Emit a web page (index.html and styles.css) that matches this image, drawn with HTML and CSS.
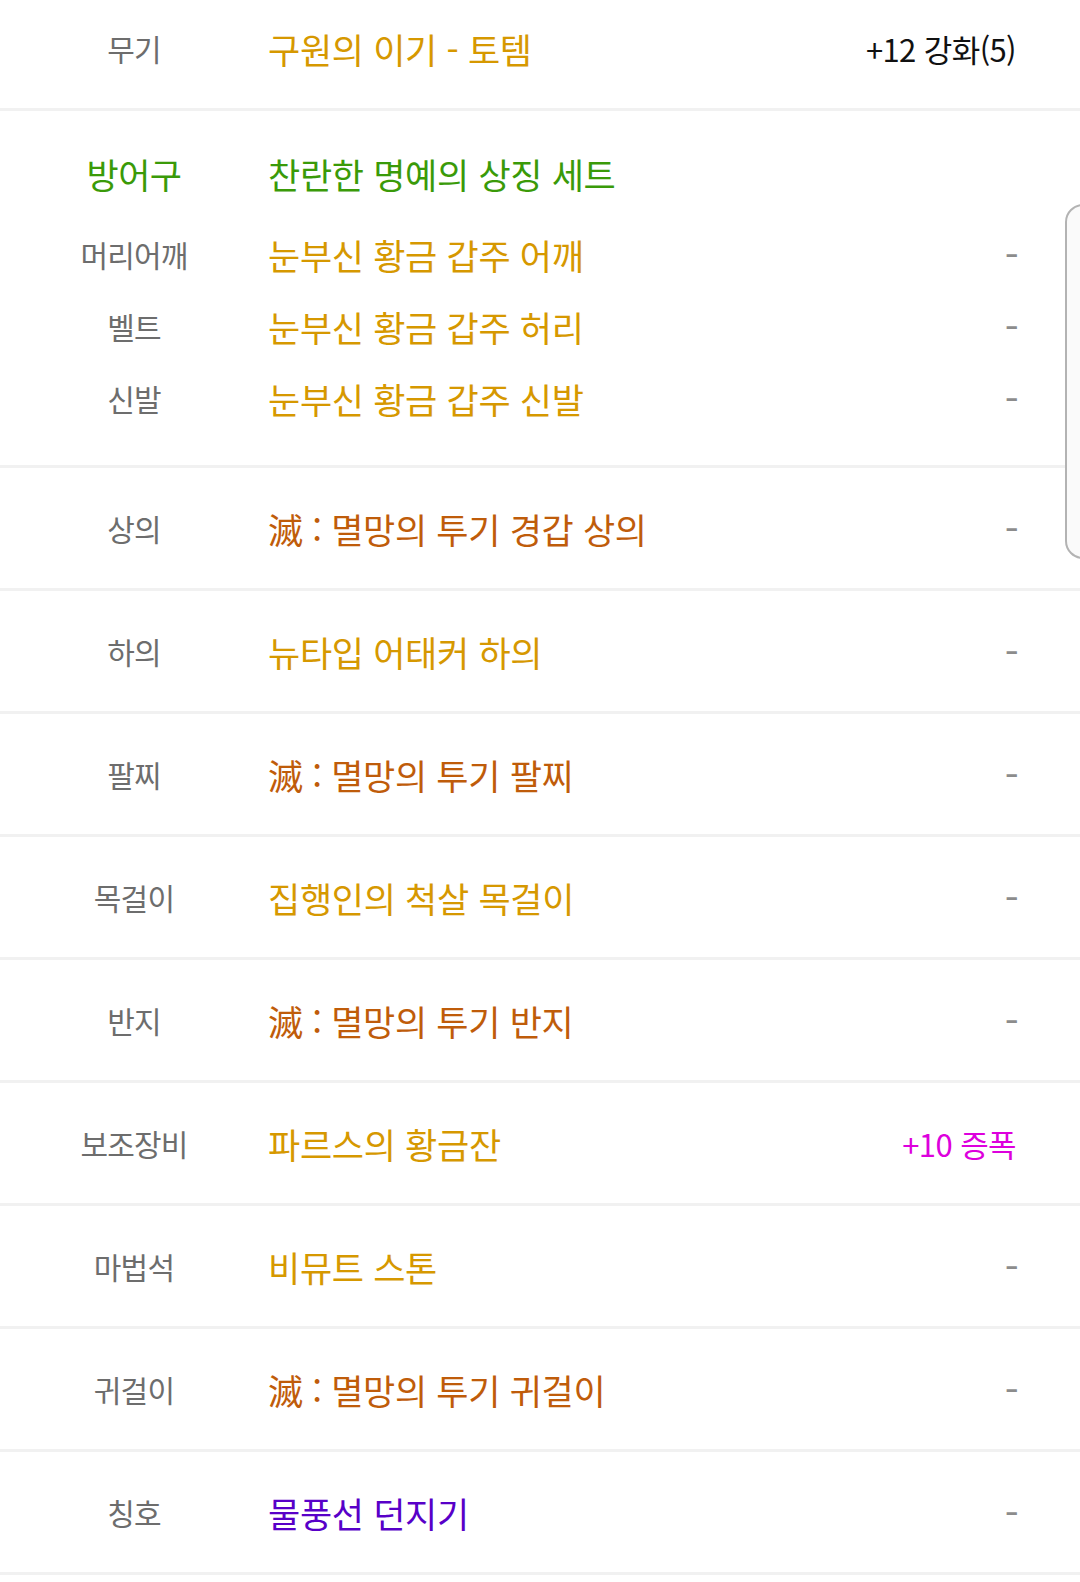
FILE: index.html
```html
<!DOCTYPE html>
<html lang="ko">
<head>
  <meta charset="UTF-8">
  <title>장비</title>
  <link rel="stylesheet" href="styles.css">
</head>
<body>
  <!-- 장비 목록 -->
  <div class="equip-list">
    <div class="row">
      <div class="slot">무기</div>
      <div class="name gold">구원의 이기 - 토템</div>
      <div class="value">+12 강화(5)</div>
    </div>

    <!-- 세트 묶음 -->
    <div class="set">
      <div class="set-head">
        <div class="slot green big">방어구</div>
        <div class="name green">찬란한 명예의 상징 세트</div>
      </div>
      <div class="set-items">
        <div class="set-row">
          <div class="slot">머리어깨</div>
          <div class="name gold">눈부신 황금 갑주 어깨</div>
          <div class="value dash">-</div>
        </div>
        <div class="set-row">
          <div class="slot">벨트</div>
          <div class="name gold">눈부신 황금 갑주 허리</div>
          <div class="value dash">-</div>
        </div>
        <div class="set-row">
          <div class="slot">신발</div>
          <div class="name gold">눈부신 황금 갑주 신발</div>
          <div class="value dash">-</div>
        </div>
      </div>
    </div>

    <div class="row">
      <div class="slot">상의</div>
      <div class="name rust">滅 : 멸망의 투기 경갑 상의</div>
      <div class="value dash">-</div>
    </div>
    <div class="row">
      <div class="slot">하의</div>
      <div class="name gold">뉴타입 어태커 하의</div>
      <div class="value dash">-</div>
    </div>
    <div class="row">
      <div class="slot">팔찌</div>
      <div class="name rust">滅 : 멸망의 투기 팔찌</div>
      <div class="value dash">-</div>
    </div>
    <div class="row">
      <div class="slot">목걸이</div>
      <div class="name gold">집행인의 척살 목걸이</div>
      <div class="value dash">-</div>
    </div>
    <div class="row">
      <div class="slot">반지</div>
      <div class="name rust">滅 : 멸망의 투기 반지</div>
      <div class="value dash">-</div>
    </div>
    <div class="row">
      <div class="slot">보조장비</div>
      <div class="name gold">파르스의 황금잔</div>
      <div class="value magenta">+10 증폭</div>
    </div>
    <div class="row">
      <div class="slot">마법석</div>
      <div class="name gold">비뮤트 스톤</div>
      <div class="value dash">-</div>
    </div>
    <div class="row">
      <div class="slot">귀걸이</div>
      <div class="name rust">滅 : 멸망의 투기 귀걸이</div>
      <div class="value dash">-</div>
    </div>
    <div class="row">
      <div class="slot">칭호</div>
      <div class="name purple">물풍선 던지기</div>
      <div class="value dash">-</div>
    </div>
  </div>

  <!-- 오른쪽 스크롤 손잡이 -->
  <div class="scroll-handle"></div>
</body>
</html>
```

FILE: styles.css
```css
/* 기본 리셋 */
* {
  margin: 0;
  padding: 0;
  box-sizing: border-box;
}

body {
  font-family: "Noto Sans CJK KR", "Noto Sans", sans-serif;
  background: #fff;
  width: 1080px;
  height: 1582px;
  overflow: hidden;
  position: relative;
}

/* 목록 전체 (위쪽이 살짝 잘려 있음) */
.equip-list {
  margin-top: -12px;
}

.row {
  display: flex;
  align-items: center;
  height: 123px;
  border-bottom: 3px solid #f1f1f1;
}

.slot {
  width: 268px;
  flex-shrink: 0;
  text-align: center;
  font-size: 30px;
  color: #6d6d6d;
  letter-spacing: -0.8px;
}

.slot.big {
  font-size: 35px;
  letter-spacing: -0.5px;
}

.name {
  flex: 1;
  font-size: 35px;
  letter-spacing: -0.3px;
  white-space: nowrap;
}

.value {
  padding-right: 64px;
  font-size: 31px;
  color: #111;
  letter-spacing: -0.6px;
}

/* 값이 없을 때의 대시 */
.value.dash {
  color: #8c8c8c;
  font-size: 40px;
  line-height: 1;
  padding-right: 62px;
}

/* 세트 묶음 */
.set {
  padding: 26px 0 31px;
  border-bottom: 3px solid #f1f1f1;
}

.set-head {
  display: flex;
  align-items: center;
  height: 72px;
}

.set-items {
  margin-top: 9px;
}

.set-row {
  display: flex;
  align-items: center;
  height: 72px;
}

/* 등급 색상 */
.gold {
  color: #d69800;
}

.rust {
  color: #bf5c0a;
}

.green {
  color: #3a9a08;
}

.purple {
  color: #5800c8;
}

.magenta {
  color: #dd00dd;
}

/* 스크롤 손잡이 */
.scroll-handle {
  position: absolute;
  top: 204px;
  left: 1065px;
  width: 40px;
  height: 355px;
  border: 2px solid #b3b3b3;
  border-radius: 18px;
  background: #fafafa;
}
```
